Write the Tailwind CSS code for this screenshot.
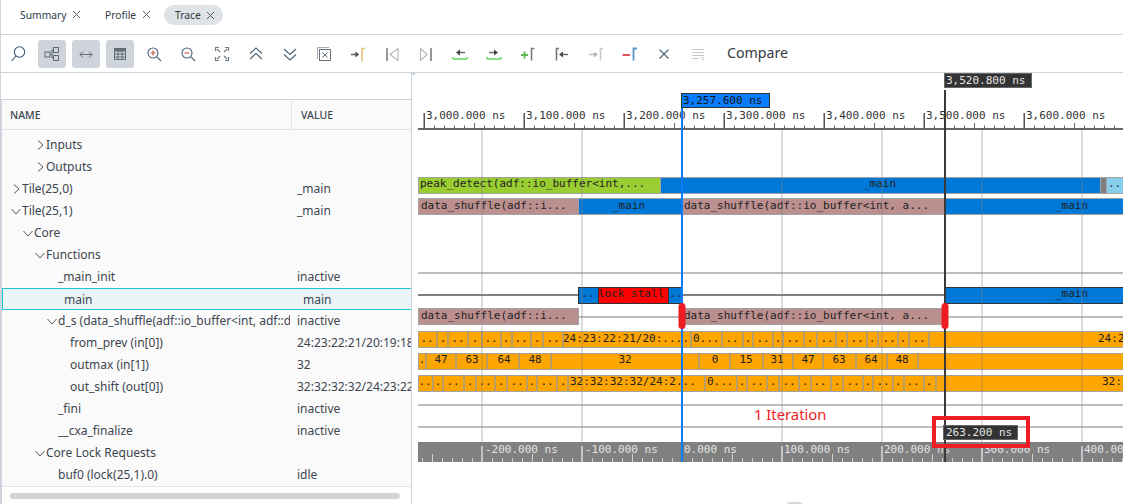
<!DOCTYPE html>
<html><head><meta charset="utf-8">
<script src="https://cdn.jsdelivr.net/npm/@tailwindcss/browser@4"></script>
</head>
<body class="bg-white">
<div class="w-[1123px] h-[504px] overflow-hidden flex flex-col bg-white font-['Noto_Sans',sans-serif] text-[#333b44] border-l border-[#ced4dc]">
  <!-- tabs -->
  <div class="h-[35px] shrink-0 border-b border-[#ced4dc] flex items-center pl-[19px] pb-[4px] text-[10.3px] leading-none">
    <div class="flex items-center w-[85px]"><span>Summary</span><svg class="ml-[5px]" width="9" height="9" viewBox="0 0 9 9" fill="none" stroke="#55606c" stroke-width="1"><path d="M1 1l7 7M8 1l-7 7"/></svg></div>
    <div class="flex items-center w-[59px]"><span>Profile</span><svg class="ml-[6px]" width="9" height="9" viewBox="0 0 9 9" fill="none" stroke="#55606c" stroke-width="1"><path d="M1 1l7 7M8 1l-7 7"/></svg></div>
    <div class="flex items-center h-[20px] w-[59px] rounded-full bg-[#dfe2e7] pl-[11px]"><span>Trace</span><svg class="ml-[5px]" width="9" height="9" viewBox="0 0 9 9" fill="none" stroke="#55606c" stroke-width="1"><path d="M1 1l7 7M8 1l-7 7"/></svg></div>
  </div>
  <!-- toolbar -->
  <div class="h-[38px] shrink-0 border-b border-[#ced4dc] flex items-center">
    <div class="w-[34px] h-[28px] flex items-center justify-center"><svg width="20" height="20" viewBox="0 0 20 20" fill="none" stroke="#3f5a72" stroke-width="1.1"><circle cx="11.5" cy="8" r="5.2"/><path d="M8 12L3.5 17"/></svg></div>
    <div class="w-[34px] h-[28px] flex items-center justify-center"><div class="w-[28px] h-[28px] rounded-[3px] bg-[#cfd4da] flex items-center justify-center"><svg width="16" height="16" viewBox="0 0 16 16" fill="none" stroke="#5f6b76" stroke-width="1"><rect x="1" y="6" width="5" height="5"/><rect x="9.5" y="1.5" width="5" height="5"/><rect x="9.5" y="9.5" width="5" height="5"/><path d="M6 8.5H8M8 4V12M8 4H9.5M8 12H9.5"/></svg></div></div>
    <div class="w-[34px] h-[28px] flex items-center justify-center"><div class="w-[28px] h-[28px] rounded-[3px] bg-[#cfd4da] flex items-center justify-center"><svg width="16" height="16" viewBox="0 0 16 16" fill="none" stroke="#5f6b76" stroke-width="1"><path d="M2 8.5H14M5 5.5L2 8.5L5 11.5M11 5.5L14 8.5L11 11.5"/></svg></div></div>
    <div class="w-[34px] h-[28px] flex items-center justify-center"><div class="w-[28px] h-[28px] rounded-[3px] bg-[#cfd4da] flex items-center justify-center"><svg width="16" height="16" viewBox="0 0 16 16" fill="none" stroke="#5f6b76" stroke-width="1"><rect x="2.5" y="2.5" width="11" height="11"/><rect x="2.5" y="2.5" width="11" height="2.5" fill="#5f6b76"/><path d="M2.5 8H13.5M2.5 11H13.5M6 5V13.5M10 5V13.5"/></svg></div></div>
    <div class="w-[34px] h-[28px] flex items-center justify-center"><svg width="18" height="18" viewBox="0 0 18 18" fill="none" stroke="#4b6378" stroke-width="1.1"><circle cx="8" cy="8" r="5"/><path d="M12 12L16 16"/><path d="M5.5 8H10.5M8 5.5V10.5" stroke="#c0503c"/></svg></div>
    <div class="w-[34px] h-[28px] flex items-center justify-center"><svg width="18" height="18" viewBox="0 0 18 18" fill="none" stroke="#4b6378" stroke-width="1.1"><circle cx="8" cy="8" r="5"/><path d="M12 12L16 16"/><path d="M5.5 8H10.5" stroke="#c0503c"/></svg></div>
    <div class="w-[34px] h-[28px] flex items-center justify-center"><svg width="16" height="16" viewBox="0 0 16 16" fill="none" stroke="#6f7b86" stroke-width="1.2"><path d="M1.5 5V1.5H5M11 1.5H14.5V5M14.5 11V14.5H11M5 14.5H1.5V11"/><path d="M3 3L6 6M13 3L10 6M13 13L10 10M3 13L6 10"/></svg></div>
    <div class="w-[34px] h-[28px] flex items-center justify-center"><svg width="16" height="16" viewBox="0 0 16 16" fill="none" stroke="#4b6378" stroke-width="1.1"><path d="M2 7.5L8 2L14 7.5M2 13L8 7.5L14 13"/></svg></div>
    <div class="w-[34px] h-[28px] flex items-center justify-center"><svg width="16" height="16" viewBox="0 0 16 16" fill="none" stroke="#4b6378" stroke-width="1.1"><path d="M2 3L8 8.5L14 3M2 8.5L8 14L14 8.5"/></svg></div>
    <div class="w-[34px] h-[28px] flex items-center justify-center"><svg width="16" height="16" viewBox="0 0 16 16" fill="none"><path d="M1.5 13V1.5H13" stroke="#a9aeb4" stroke-width="1"/><rect x="3.5" y="3.5" width="11" height="11" stroke="#66717c"/><path d="M6.5 6.5L11.5 11.5M11.5 6.5L6.5 11.5" stroke="#66717c"/></svg></div>
    <div class="w-[34px] h-[28px] flex items-center justify-center"><svg width="18" height="18" viewBox="0 0 18 18" fill="none"><path d="M2 9.5H7" stroke="#666" stroke-width="1.6"/><path d="M6.5 6.5L10 9.5L6.5 12.5Z" fill="#444"/><path d="M16 3.5H13V16.500" stroke="#e3c474" stroke-width="1.6"/></svg></div>
    <div class="w-[34px] h-[28px] flex items-center justify-center"><svg width="18" height="18" viewBox="0 0 18 18" fill="none" stroke="#b0b3b7" stroke-width="1.1"><path d="M4 3V16" stroke="#999" stroke-width="2"/><path d="M15 3.500L7 9.500L15 15.500Z"/></svg></div>
    <div class="w-[34px] h-[28px] flex items-center justify-center"><svg width="18" height="18" viewBox="0 0 18 18" fill="none" stroke="#b0b3b7" stroke-width="1.1"><path d="M14 3V16" stroke="#999" stroke-width="2"/><path d="M3.500 3.500L10 9.500L3.500 15.500Z"/></svg></div>
    <div class="w-[34px] h-[28px] flex items-center justify-center"><svg width="18" height="18" viewBox="0 0 18 18" fill="none"><path d="M2 14H16M2 12V14M16 12V14" stroke="#5fd35f" stroke-width="1.500"/><path d="M8 7.5H14" stroke="#666" stroke-width="1.4"/><path d="M9 4.5L5 7.5L9 10.5Z" fill="#444"/></svg></div>
    <div class="w-[34px] h-[28px] flex items-center justify-center"><svg width="18" height="18" viewBox="0 0 18 18" fill="none"><path d="M2 14H16M2 12V14M16 12V14" stroke="#5fd35f" stroke-width="1.500"/><path d="M4 7.5H10" stroke="#666" stroke-width="1.4"/><path d="M9 4.5L13 7.5L9 10.5Z" fill="#444"/></svg></div>
    <div class="w-[34px] h-[28px] flex items-center justify-center"><svg width="18" height="18" viewBox="0 0 18 18" fill="none"><path d="M2 10H9M5.5 6.5V13.5" stroke="#5cba55" stroke-width="1.8"/><path d="M15.5 3.5H12.5V15.500" stroke="#777" stroke-width="1.6"/></svg></div>
    <div class="w-[34px] h-[28px] flex items-center justify-center"><svg width="18" height="18" viewBox="0 0 18 18" fill="none"><path d="M6 3.5H3.5V15.500" stroke="#777" stroke-width="1.6"/><path d="M9 9.5H15" stroke="#666" stroke-width="1.4"/><path d="M10 6.5L6 9.5L10 12.5Z" fill="#444"/></svg></div>
    <div class="w-[34px] h-[28px] flex items-center justify-center"><svg width="18" height="18" viewBox="0 0 18 18" fill="none"><path d="M2 9.5H8" stroke="#b5b8bb" stroke-width="1.4"/><path d="M7 6.5L11 9.5L7 12.5Z" fill="#b5b8bb"/><path d="M16 3.5H13.5V15.500" stroke="#c8cacc" stroke-width="1.6"/></svg></div>
    <div class="w-[34px] h-[28px] flex items-center justify-center"><svg width="18" height="18" viewBox="0 0 18 18" fill="none"><path d="M1.5 10H9" stroke="#e5404a" stroke-width="1.8"/><path d="M16 3.5H12.5V15.500" stroke="#5b97c4" stroke-width="1.8"/></svg></div>
    <div class="w-[34px] h-[28px] flex items-center justify-center"><svg width="12" height="12" viewBox="0 0 12 12" fill="none" stroke="#4b6378" stroke-width="1.1"><path d="M1.5 1.5L10.5 10.5M10.5 1.5L1.5 10.5"/></svg></div>
    <div class="w-[34px] h-[28px] flex items-center justify-center"><svg width="14" height="14" viewBox="0 0 14 14" fill="none" stroke="#c5c8cb" stroke-width="1"><path d="M1 2.5H13M1 5.5H13M1 8.5H13M1 11.5H8"/><path d="M10 10L13 13M13 10L10 13"/></svg></div>
    <span class="ml-[12px] text-[14.2px] leading-none text-[#333b44] pb-[1px]">Compare</span>
  </div>
  <!-- main -->
  <div class="flex-1 flex min-h-0">
    <!-- tree -->
    <div class="w-[411px] shrink-0 border-r border-[#ced4dc] pt-[26px] bg-white flex flex-col min-h-0">
      <div class="flex flex-col border-t border-l border-[#ced4dc] bg-[#fafafa] flex-1 min-h-0 text-[12px] leading-[22px] text-[#3c4650]">
        <div class="h-[30px] shrink-0 flex border-b border-[#dfe3e8] text-[10.5px] font-medium">
          <div class="w-[290px] pl-[8px] border-r border-[#dfe3e8] leading-[30px]">NAME</div>
          <div class="pl-[9px] leading-[30px]">VALUE</div>
        </div>
        <div class="h-[4px] shrink-0"></div>
        <div class="h-[22px] flex"><div class="w-[295px] pl-[35px] flex items-center"><svg class="mr-[2px]" width="7" height="10" viewBox="0 0 7 10" fill="none" stroke="#555"><path d="M1 .5L6 5L1 9.5"/></svg><span>Inputs</span></div></div>
        <div class="h-[22px] flex"><div class="w-[295px] pl-[35px] flex items-center"><svg class="mr-[2px]" width="7" height="10" viewBox="0 0 7 10" fill="none" stroke="#555"><path d="M1 .5L6 5L1 9.5"/></svg><span>Outputs</span></div></div>
        <div class="h-[22px] flex"><div class="w-[295px] pl-[11px] flex items-center"><svg class="mr-[2px]" width="7" height="10" viewBox="0 0 7 10" fill="none" stroke="#555"><path d="M1 .5L6 5L1 9.5"/></svg><span>Tile(25,0)</span></div><div>_main</div></div>
        <div class="h-[22px] flex"><div class="w-[295px] pl-[9px] flex items-center"><svg class="mr-[1px]" width="10" height="7" viewBox="0 0 10 7" fill="none" stroke="#555"><path d="M.5 1L5 6L9.5 1"/></svg><span>Tile(25,1)</span></div><div>_main</div></div>
        <div class="h-[22px] flex"><div class="w-[295px] pl-[21px] flex items-center"><svg class="mr-[1px]" width="10" height="7" viewBox="0 0 10 7" fill="none" stroke="#555"><path d="M.5 1L5 6L9.5 1"/></svg><span>Core</span></div></div>
        <div class="h-[22px] flex"><div class="w-[295px] pl-[33px] flex items-center"><svg class="mr-[1px]" width="10" height="7" viewBox="0 0 10 7" fill="none" stroke="#555"><path d="M.5 1L5 6L9.5 1"/></svg><span>Functions</span></div></div>
        <div class="h-[22px] flex"><div class="w-[295px] pl-[56px]">_main_init</div><div>inactive</div></div>
        <div class="h-[22px] flex border-y border-[#20c5d0] border-l bg-[#eaf4f6] leading-[21px]"><div class="w-[294px] pl-[61px]">main</div><div class="pl-[6px]">main</div></div>
        <div class="h-[22px] flex"><div class="w-[295px] pl-[45px] flex items-center overflow-hidden whitespace-nowrap"><svg class="mr-[1px] shrink-0" width="10" height="7" viewBox="0 0 10 7" fill="none" stroke="#555"><path d="M.5 1L5 6L9.5 1"/></svg><span class="w-[232px] overflow-hidden">d_s (data_shuffle(adf::io_buffer&lt;int, adf::di</span></div><div>inactive</div></div>
        <div class="h-[22px] flex overflow-hidden whitespace-nowrap"><div class="w-[295px] shrink-0 pl-[68px]">from_prev (in[0])</div><div>24:23:22:21/20:19:18:17</div></div>
        <div class="h-[22px] flex"><div class="w-[295px] pl-[68px]">outmax (in[1])</div><div>32</div></div>
        <div class="h-[22px] flex overflow-hidden whitespace-nowrap"><div class="w-[295px] shrink-0 pl-[68px]">out_shift (out[0])</div><div>32:32:32:32/24:23:22:21</div></div>
        <div class="h-[22px] flex"><div class="w-[295px] pl-[56px]">_fini</div><div>inactive</div></div>
        <div class="h-[22px] flex"><div class="w-[295px] pl-[56px]">__cxa_finalize</div><div>inactive</div></div>
        <div class="h-[22px] flex"><div class="w-[295px] pl-[33px] flex items-center"><svg class="mr-[1px]" width="10" height="7" viewBox="0 0 10 7" fill="none" stroke="#555"><path d="M.5 1L5 6L9.5 1"/></svg><span>Core Lock Requests</span></div></div>
        <div class="h-[22px] flex"><div class="w-[295px] pl-[56px]">buf0 (lock(25,1).0)</div><div>idle</div></div>
        <div class="flex-1 border-t border-[#dfe3e8] flex items-start pt-[6px] pl-[8px] bg-white"><div class="w-[390px] h-[6px] rounded-full bg-[#d2d4d7]"></div></div>
      </div>
    </div>
    <!-- trace canvas -->
    <div class="flex-1 relative">
      <svg class="block font-['DejaVu_Sans_Mono',monospace]" width="711" height="431" viewBox="412 73 711 431" font-size="11" fill="#222">
        <rect x="412" y="73" width="3" height="2" fill="#ced4dc"/>
        <!-- ruler -->
        <rect x="418" y="128" width="705" height="2" fill="#666"/>
        <line x1="424" y1="127" x2="1123" y2="127" stroke="#666" stroke-width="3" stroke-dasharray="1 9"/>
        <line x1="474" y1="125.500" x2="1123" y2="125.500" stroke="#666" stroke-width="5" stroke-dasharray="1 99"/>
        <line x1="423.500" y1="120.500" x2="1123" y2="120.500" stroke="#555" stroke-width="15" stroke-dasharray="1.500 98.500"/>
        <g fill="#333">
          <text x="426" y="119">3,000.000 ns</text><text x="526" y="119">3,100.000 ns</text><text x="626" y="119">3,200.000 ns</text><text x="726" y="119">3,300.000 ns</text><text x="826" y="119">3,400.000 ns</text><text x="926" y="119">3,500.000 ns</text><text x="1026" y="119">3,600.000 ns</text>
        </g>
        <!-- row lines -->
        <g fill="#bdbdbd">
          <rect x="418" y="272" width="705" height="2"/>
          <rect x="418" y="404" width="705" height="2"/>
          <rect x="418" y="426" width="705" height="2"/>
          <rect x="578" y="316" width="104" height="2"/>
          <rect x="945" y="316" width="178" height="2"/>
        </g>
        <rect x="418" y="294" width="527" height="2" fill="#808080"/>
        <!-- function bars -->
        <g stroke="#a3a3a3">
          <rect x="418.500" y="177.500" width="242" height="16" fill="#9acd32"/>
          <rect x="660.500" y="177.500" width="440" height="16" fill="#0078d7"/>
          <rect x="1100.500" y="177.500" width="6" height="16" fill="#808080"/>
          <rect x="1106.500" y="177.500" width="18" height="16" fill="#87ceeb"/>
          <rect x="418.500" y="198.500" width="160" height="16" fill="#bc8f8f"/>
          <rect x="578.500" y="198.500" width="104" height="16" fill="#0078d7"/>
          <rect x="682.500" y="198.500" width="263" height="16" fill="#bc8f8f"/>
          <rect x="945.500" y="198.500" width="180" height="16" fill="#0078d7"/>
          <rect x="418.500" y="308.500" width="160" height="16" fill="#bc8f8f"/>
          <rect x="682.500" y="308.500" width="263" height="16" fill="#bc8f8f"/>
        </g>
        <text x="420" y="187">peak_detect(adf::io_buffer&lt;int,...</text>
        <text x="863" y="187">_main</text>
        <text x="1108" y="187">..</text>
        <text x="421" y="209">data_shuffle(adf::i...</text>
        <text x="612" y="209">_main</text>
        <text x="684" y="209">data_shuffle(adf::io_buffer&lt;int, a...</text>
        <text x="1055" y="209">_main</text>
        <!-- row main -->
        <g stroke="#333">
          <rect x="578.500" y="287.500" width="20" height="16" fill="#0078d7"/>
          <rect x="598.500" y="287.500" width="70" height="16" fill="#ff0000"/>
          <rect x="668.500" y="287.500" width="14" height="16" fill="#0078d7"/>
          <rect x="945.500" y="287.500" width="180" height="16" fill="#0078d7"/>
        </g>
        <text x="581" y="297">..</text><text x="598" y="297">lock stall</text><text x="669" y="297">..</text><text x="1055" y="297">_main</text>
        <text x="421" y="319">data_shuffle(adf::i...</text>
        <text x="684" y="319">data_shuffle(adf::io_buffer&lt;int, a...</text>
        <!-- orange rows -->
        <rect x="418.500" y="331.500" width="706" height="16" fill="#ffa500" stroke="#a3a3a3"/>
        <rect x="418.500" y="353.500" width="706" height="16" fill="#ffa500" stroke="#a3a3a3"/>
        <rect x="418.500" y="375.500" width="706" height="16" fill="#ffa500" stroke="#a3a3a3"/>
        <path stroke="#a39a85" stroke-width="1.500" fill="none" d="M437 331V347M448 331V347M468 331V347M482 331V347M501 331V347M512 331V347M531 331V347M543 331V347M563 331V347M682 331V347M691 331V347M722 331V347M743 331V347M753 331V347M773 331V347M783 331V347M804 331V347M817 331V347M836 331V347M847 331V347M867 331V347M878 331V347M898 331V347M909 331V347M929 331V347
        M426 353V369M456 353V369M487 353V369M519 353V369M551 353V369M699 353V369M730 353V369M763 353V369M793 353V369M823 353V369M856 353V369M887 353V369M918 353V369
        M433 375V391M443 375V391M464 375V391M476 375V391M495 375V391M507 375V391M527 375V391M537 375V391M557 375V391M568 375V391M705 375V391M737 375V391M747 375V391M767 375V391M779 375V391M799 375V391M811 375V391M831 375V391M843 375V391M863 375V391M873 375V391M893 375V391M904 375V391M924 375V391M936 375V391"/>
        <g text-anchor="middle">
          <text x="427" y="342">..</text><text x="443" y="342">.</text><text x="458" y="342">..</text><text x="475" y="342">.</text><text x="491" y="342">..</text><text x="506" y="342">.</text><text x="521" y="342">..</text><text x="537" y="342">.</text><text x="553" y="342">..</text>
          <text x="732" y="342">..</text><text x="748" y="342">.</text><text x="763" y="342">..</text><text x="778" y="342">.</text><text x="793" y="342">..</text><text x="810" y="342">.</text><text x="827" y="342">..</text><text x="842" y="342">.</text><text x="857" y="342">..</text><text x="872" y="342">.</text><text x="889" y="342">..</text><text x="903" y="342">.</text><text x="919" y="342">..</text>
          <text x="422" y="363">.</text><text x="441" y="363">47</text><text x="472" y="363">63</text><text x="504" y="363">64</text><text x="535" y="363">48</text><text x="625" y="363">32</text><text x="715" y="363">0</text><text x="746" y="363">15</text><text x="777" y="363">31</text><text x="808" y="363">47</text><text x="839" y="363">63</text><text x="871" y="363">64</text><text x="902" y="363">48</text>
          <text x="425" y="385">..</text><text x="438" y="385">.</text><text x="453" y="385">..</text><text x="470" y="385">.</text><text x="485" y="385">..</text><text x="501" y="385">.</text><text x="517" y="385">..</text><text x="532" y="385">.</text><text x="547" y="385">..</text><text x="563" y="385">.</text>
          <text x="742" y="385">.</text><text x="757" y="385">..</text><text x="773" y="385">.</text><text x="789" y="385">..</text><text x="805" y="385">.</text><text x="820" y="385">..</text><text x="837" y="385">.</text><text x="853" y="385">..</text><text x="868" y="385">.</text><text x="883" y="385">..</text><text x="898" y="385">.</text><text x="913" y="385">..</text><text x="929" y="385">.</text>
        </g>
        <text x="563" y="342">24:23:22:21/20:....</text><text x="693" y="342">0...</text><text x="1098" y="342">24:2</text>
        <text x="570" y="385">32:32:32:32/24:2...</text><text x="707" y="385">0...</text><text x="1102" y="385">32:</text>
        <!-- bottom axis -->
        <rect x="418" y="442" width="705" height="20" fill="#808080"/>
        <line x1="422" y1="460" x2="1123" y2="460" stroke="#d0d0d0" stroke-width="4" stroke-dasharray="1 9"/>
        <line x1="432" y1="458" x2="1123" y2="458" stroke="#d0d0d0" stroke-width="8" stroke-dasharray="1 99"/>
        <line x1="481" y1="454" x2="1123" y2="454" stroke="#ddd" stroke-width="16" stroke-dasharray="2 98"/>
        <g fill="#e4e4e4">
          <text x="485" y="453">-200.000 ns</text><text x="585" y="453">-100.000 ns</text><text x="684" y="453">0.000 ns</text><text x="784" y="453">100.000 ns</text><text x="884" y="453">200.000 ns</text><text x="984" y="453">300.000 ns</text><text x="1084" y="453">400.000 ns</text>
        </g>
        <!-- grid lines -->
        <g fill="#808080" fill-opacity="0.270">
          <rect x="481" y="130" width="2" height="332"/><rect x="581" y="130" width="2" height="332"/><rect x="781" y="130" width="2" height="332"/><rect x="881" y="130" width="2" height="332"/><rect x="981" y="130" width="2" height="332"/><rect x="1081" y="130" width="2" height="332"/>
        </g>
        <!-- iteration annotation -->
        <text x="754" y="420" font-size="14.800" fill="#ee1c25" class="font-['Noto_Sans',sans-serif]">1 Iteration</text>
        <!-- cursors -->
        <rect x="681" y="107" width="2" height="355" fill="#0a7cff"/>
        <rect x="944" y="90" width="2" height="372" fill="#3a3a3a"/>
        <rect x="678.500" y="303" width="7" height="26" rx="3.500" fill="#ee1c25"/>
        <rect x="941.500" y="303" width="7" height="26" rx="3.500" fill="#ee1c25"/>
        <rect x="681.500" y="93.500" width="88" height="14" fill="#0a7cff" stroke="#333"/>
        <text x="683" y="104" fill="#111">3,257.600 ns</text>
        <rect x="944.500" y="73.500" width="87" height="14" fill="#333" stroke="#666"/>
        <text x="946" y="84" fill="#e4e4e4">3,520.800 ns</text>
        <rect x="943.500" y="425.500" width="74" height="14" fill="#333" stroke="#666"/>
        <text x="946" y="436" fill="#e4e4e4">263.200 ns</text>
        <rect x="934" y="418" width="94" height="28" fill="none" stroke="#ee1c25" stroke-width="4"/>
        <rect x="787" y="502" width="15" height="4" rx="2" fill="#d8d8d8"/>
      </svg>
    </div>
  </div>
</div>
</body></html>
